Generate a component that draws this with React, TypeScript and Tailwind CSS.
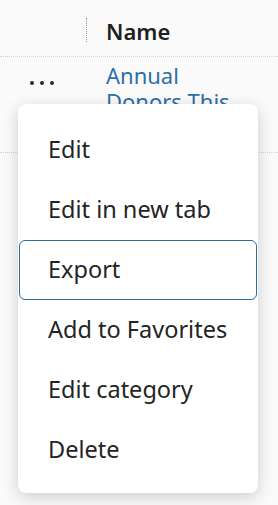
import React from "react";

const items = ["Edit", "Edit in new tab", "Export", "Add to Favorites", "Edit category", "Delete"];

export default function App() {
  return (
    <div
      className="relative w-[278px] h-[505px] overflow-hidden bg-[#fafafa] text-[#242424]"
      style={{ fontFamily: '"Segoe UI", "Noto Sans", sans-serif' }}
    >
      <div className="flex h-[57px] items-center border-b border-dotted border-[#d4d4d4]">
        <div className="w-[87px] h-full flex items-center justify-end">
          <div className="h-[24px] border-r border-dotted border-[#9a9a9a] mt-[4px]" />
        </div>
        <div className="pl-[19px] pt-[6px] text-[22px] font-semibold text-[#1f1f1f]">Name</div>
      </div>
      <div className="flex h-[96px] border-b border-dotted border-[#d4d4d4]">
        <div className="w-[87px] flex items-start gap-[6px] pl-[30px] pt-[24px]">
          <span className="w-[4px] h-[4px] rounded-full bg-[#2a2a2a]" />
          <span className="w-[4px] h-[4px] rounded-full bg-[#2a2a2a]" />
          <span className="w-[4px] h-[4px] rounded-full bg-[#2a2a2a]" />
        </div>
        <div className="pl-[19px] pt-[5px] text-[22px] leading-[26px] text-[#2f6ea8]">
          Annual
          <br />
          Donors This
        </div>
      </div>
      <div className="absolute left-[18px] top-[104px] w-[240px] h-[389px] rounded-[8px] bg-white shadow-[0_4px_16px_rgba(0,0,0,0.18)] flex flex-col pt-[16px]">
        {items.map((t) => (
          <div
            key={t}
            className={
              "h-[60px] flex items-center text-[23.5px] text-[#242424] shrink-0 " +
              (t === "Export" ? "mx-[1px] pl-[28px] border border-[#2f6a9b] rounded-[6px]" : "pl-[30px]")
            }
          >
            {t}
          </div>
        ))}
      </div>
    </div>
  );
}
